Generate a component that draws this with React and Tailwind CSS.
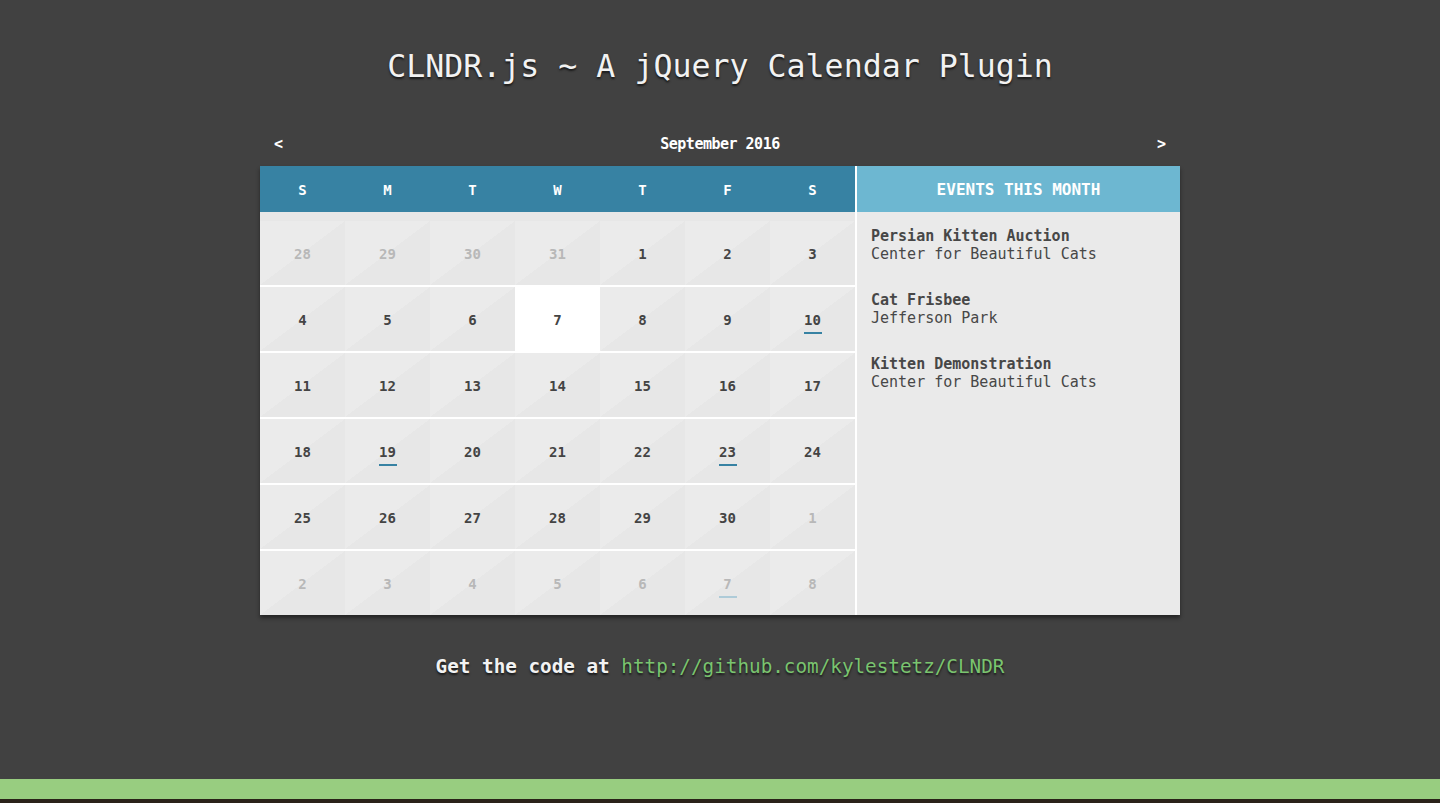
const weekdays = ['S', 'M', 'T', 'W', 'T', 'F', 'S']

// Six weeks of September 2016, with the spill-over days from Aug / Oct.
const weeks = [
  [28, 29, 30, 31, 1, 2, 3],
  [4, 5, 6, 7, 8, 9, 10],
  [11, 12, 13, 14, 15, 16, 17],
  [18, 19, 20, 21, 22, 23, 24],
  [25, 26, 27, 28, 29, 30, 1],
  [2, 3, 4, 5, 6, 7, 8],
]

const eventDays = [10, 19, 23]

const events = [
  { title: 'Persian Kitten Auction', location: 'Center for Beautiful Cats' },
  { title: 'Cat Frisbee', location: 'Jefferson Park' },
  { title: 'Kitten Demonstration', location: 'Center for Beautiful Cats' },
]

function DayCell({ day, adjacent, today, hasEvent }) {
  const bg = today
    ? 'bg-white'
    : 'bg-[linear-gradient(to_bottom_right,#ebebeb_50%,#e7e7e7_50%)]'
  return (
    <div className={`relative flex h-[64px] w-[85px] items-center justify-center pt-[2px] ${bg}`}>
      <span className={`text-[14px] font-bold leading-none ${adjacent ? 'text-[#b8b8b8]' : 'text-[#444444]'}`}>
        {day}
      </span>
      {hasEvent && (
        <span
          className={`absolute left-1/2 top-[45px] h-[2px] w-[18px] -translate-x-1/2 ${
            adjacent ? 'bg-[#aecbd8]' : 'bg-[#3782a3]'
          }`}
        />
      )}
    </div>
  )
}

export default function App() {
  return (
    <div className="flex min-h-[803px] flex-col bg-[#414141] font-['DejaVu_Sans_Mono',monospace]">
      <div className="flex flex-1 flex-col items-center">
        <h1 className="pt-[46px] text-[31.6px] leading-[40px] text-[#f2f2f2] [text-shadow:0_2px_2px_#1a1a1a]">
          CLNDR.js ~ A jQuery Calendar Plugin
        </h1>

        <div className="mt-[40px] w-[920px]">
          <div className="flex h-[40px] items-center justify-between px-[14px] pb-[4px] text-[15px] font-bold text-white">
            <span>&lt;</span>
            <span className="tracking-[-0.5px]">September 2016</span>
            <span>&gt;</span>
          </div>

          <div className="flex bg-[#e9e9e9] shadow-[0_3px_4px_rgba(0,0,0,0.45)]">
            <div className="w-[595px]">
              <div className="flex h-[46px] bg-[#3782a3]">
                {weekdays.map((d, i) => (
                  <div key={i} className="flex w-[85px] items-center justify-center pt-[2px] text-[14px] font-bold text-white">
                    {d}
                  </div>
                ))}
              </div>
              <div className="flex flex-col gap-[2px] pt-[9px] [background:linear-gradient(#e7e7e7_0_9px,white_9px)]">
                {weeks.map((week, wi) => (
                  <div key={wi} className="flex">
                    {week.map((day, di) => {
                      const adjacent = (wi === 0 && day > 7) || (wi >= 4 && day < 20)
                      const today = !adjacent && day === 7
                      const hasEvent = (!adjacent && eventDays.includes(day)) || (adjacent && wi === 5 && day === 7)
                      return <DayCell key={di} day={day} adjacent={adjacent} today={today} hasEvent={hasEvent} />
                    })}
                  </div>
                ))}
              </div>
            </div>

            <div className="w-[2px] bg-white" />

            <div className="flex-1 bg-[#eaeaea]">
              <div className="flex h-[46px] items-center justify-center bg-[#6db7d1] pt-[2px] text-[16px] font-bold text-white">
                EVENTS THIS MONTH
              </div>
              <div className="flex flex-col gap-[28px] px-[14px] pt-[15px] text-[15px] leading-[18px] text-[#474747]">
                {events.map((e) => (
                  <div key={e.title}>
                    <div className="font-bold">{e.title}</div>
                    <div>{e.location}</div>
                  </div>
                ))}
              </div>
            </div>
          </div>
        </div>

        <p className="mt-[40px] text-[19.3px] leading-[24px] [text-shadow:0_2px_2px_#1a1a1a]">
          <span className="font-bold text-[#f2f2f2]">Get the code at </span>
          <a href="#" className="text-[#7ac46f]">http://github.com/kylestetz/CLNDR</a>
        </p>
      </div>

      <div className="h-[20px] bg-[#98cd80]" />
      <div className="h-[4px] bg-[#2a2219]" />
    </div>
  )
}
